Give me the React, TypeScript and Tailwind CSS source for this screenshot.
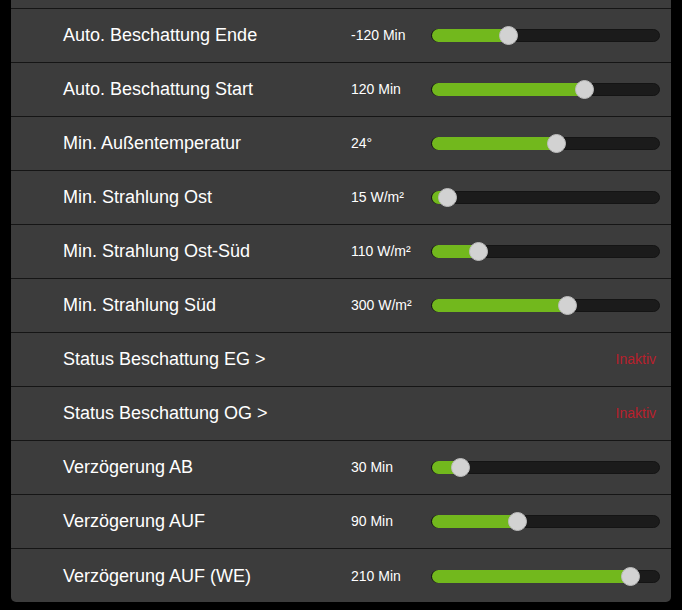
import React from 'react'

interface Row {
  label: string
  value?: string
  pos?: number // thumb centre in px from track start
  status?: string
}

const rows: Row[] = [
  { label: 'Auto. Beschattung Ende', value: '-120 Min', pos: 77 },
  { label: 'Auto. Beschattung Start', value: '120 Min', pos: 153 },
  { label: 'Min. Außentemperatur', value: '24°', pos: 125 },
  { label: 'Min. Strahlung Ost', value: '15 W/m²', pos: 16 },
  { label: 'Min. Strahlung Ost-Süd', value: '110 W/m²', pos: 47 },
  { label: 'Min. Strahlung Süd', value: '300 W/m²', pos: 136 },
  { label: 'Status Beschattung EG >', status: 'Inaktiv' },
  { label: 'Status Beschattung OG >', status: 'Inaktiv' },
  { label: 'Verzögerung AB', value: '30 Min', pos: 29 },
  { label: 'Verzögerung AUF', value: '90 Min', pos: 86 },
  { label: 'Verzögerung AUF (WE)', value: '210 Min', pos: 199 },
]

const Slider: React.FC<{ pos: number }> = ({ pos }) => (
  <div className="relative w-[229px] h-[13px] rounded-full bg-[#1b1b1b] border border-[#141414]">
    <div className="absolute left-0 top-[-1px] h-[13px] rounded-l-full bg-[#72b81d]" style={{ width: pos }} />
    <div
      className="absolute top-[-4px] w-[19px] h-[19px] rounded-full bg-[#d2d2d2] border border-[#bdbdbd]"
      style={{ left: pos - 10 }}
    />
  </div>
)

export default function App() {
  return (
    <div className="min-h-[610px] bg-black px-[11px] pb-[8px]" style={{ fontFamily: '"Liberation Sans", Arial, sans-serif' }}>
      <div className="bg-[#3c3c3c] rounded-b-[5px] text-white">
        <div className="h-[9px] border-b border-[#151515]" />
        {rows.map((row, i) => (
          <div
            key={row.label}
            className={`flex items-center ${i === rows.length - 1 ? 'h-[53px] pt-[1px]' : 'h-[54px] border-b border-[#151515]'}`}
          >
            <div className="w-[340px] pl-[52px] text-[18px]">{row.label}</div>
            {row.status ? (
              <div className="flex-1 text-right pr-[15px] text-[14px] text-[#b8202c]">{row.status}</div>
            ) : (
              <>
                <div className="w-[80px] text-[14px]">{row.value}</div>
                <Slider pos={row.pos ?? 0} />
              </>
            )}
          </div>
        ))}
      </div>
    </div>
  )
}
